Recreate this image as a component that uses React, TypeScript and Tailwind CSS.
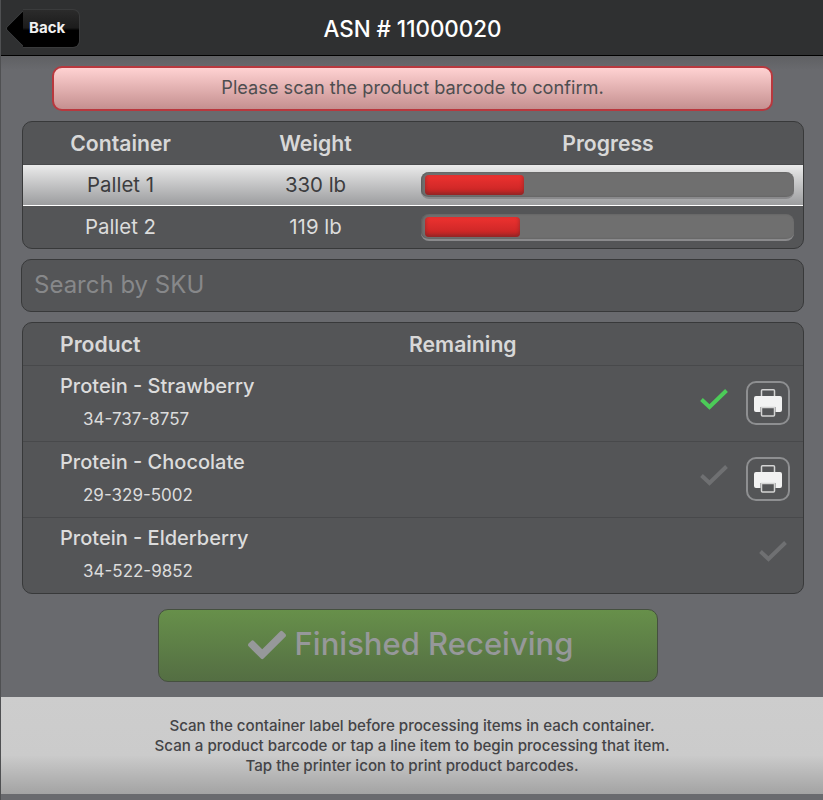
import { FaCheck } from "react-icons/fa";

const containers = [
  { name: "Pallet 1", weight: "330 lb", fill: "w-[99px]", active: true },
  { name: "Pallet 2", weight: "119 lb", fill: "w-[95px]", active: false },
];

const products = [
  { name: "Protein - Strawberry", sku: "34-737-8757", done: true, printer: true },
  { name: "Protein - Chocolate", sku: "29-329-5002", done: false, printer: true },
  { name: "Protein - Elderberry", sku: "34-522-9852", done: false, printer: false },
];

function PrinterIcon() {
  return (
    <svg viewBox="0 0 28 28" className="w-[28px] h-[28px]">
      <path d="M7.500 7.500V1.800a1 1 0 0 1 1-1h11a1 1 0 0 1 1 1v5.700" fill="none" stroke="#d4d4d4" strokeWidth="1.500" />
      <path d="M2 7h24a2 2 0 0 1 2 2v12a2 2 0 0 1-2 2h-4.500v-5h-15v5H2a2 2 0 0 1-2-2V9a2 2 0 0 1 2-2z" fill="#f2f2f2" />
      <path d="M7.500 18.500h13V26a1 1 0 0 1-1 1h-11a1 1 0 0 1-1-1z" fill="none" stroke="#d4d4d4" strokeWidth="1.500" />
    </svg>
  );
}

function Tick({ done }: { done: boolean }) {
  return (
    <svg viewBox="0 0 28 21" className="w-[28px] h-[21px] block">
      <path d="M1.500 10.500L9.500 18L26.500 1.500" fill="none" stroke={done ? "#4ccb58" : "#6f7072"} strokeWidth="4" />
    </svg>
  );
}

export default function App() {
  return (
    <div className="w-[823px] h-[800px] overflow-hidden flex flex-col bg-[#696a6e] border-l border-[#4f5052] font-['Inter',sans-serif]">
      <header className="h-[56px] shrink-0 relative flex items-center justify-center bg-[#2f3031] border-b border-black">
        <button className="absolute left-[6px] top-[9px] h-[39px] w-[73px] flex items-center">
          <span className="absolute left-[3px] top-[6px] w-[27px] h-[27px] rotate-45 rounded-[4px] border-b border-l border-[#3a3b3c] bg-gradient-to-tr from-black via-black to-[#2a2a2a]"></span>
          <span className="absolute left-[16px] right-0 top-0 bottom-0 rounded-r-[7px] border border-l-0 border-[#3a3b3c] bg-[linear-gradient(#2b2b2b_0%,#1c1c1c_48%,#000_55%,#000_100%)]"></span>
          <span className="relative ml-[22px] text-[15px] font-bold text-[#f0f0f0]">Back</span>
        </button>
        <h1 className="pt-[2px] pl-[1px] text-[22.400px] font-medium text-white">ASN # 11000020</h1>
      </header>

      <main className="flex-1 flex flex-col bg-[linear-gradient(#5f6063_0px,#696a6e_14px)]">
        <div className="mt-[10px] ml-[51px] w-[721px] h-[45px] flex items-center justify-center pb-[1px] rounded-[10px] border-2 border-[#b8383e] bg-gradient-to-b from-[#ffd2d2] to-[#c59090] text-[18.200px] text-[#4e4e50]">
          Please scan the product barcode to confirm.
        </div>

        <section className="mt-[10px] ml-[21px] w-[782px] h-[128px] rounded-[10px] border border-[#38393a] bg-[#545557] overflow-hidden">
          <div className="h-[43px] flex items-center pt-[2px] text-[21.200px] font-semibold text-[#d8d8d8] border-b border-[#4a4b4d]">
            <div className="w-[195px] text-center">Container</div>
            <div className="w-[195px] text-center">Weight</div>
            <div className="flex-1 text-center">Progress</div>
          </div>
          {containers.map((c) => (
            <div
              key={c.name}
              className={
                c.active
                  ? "h-[41px] flex items-center text-[20.400px] text-[#3c3c3e] border-b border-white bg-gradient-to-b from-[#ebebeb] to-[#9c9d9f]"
                  : "h-[42px] flex items-center text-[20.400px] text-[#dcdcdc]"
              }
            >
              <div className={c.active ? "w-[195px] pt-[1px] text-center" : "w-[195px] text-center"}>{c.name}</div>
              <div className={c.active ? "w-[195px] pt-[1px] text-center" : "w-[195px] text-center"}>{c.weight}</div>
              <div className="flex-1 pl-[8px] pr-[9px]">
                <div className="h-[27px] rounded-[8px] bg-[#6f6f6f] border-b-2 border-[#8a8a8c] shadow-[inset_1px_0_2px_#5a5a5a] px-[4px] pt-[3px]">
                  <div className={`${c.fill} h-[20px] rounded-[4px] bg-gradient-to-b from-[#ee3230] to-[#c42424] shadow-[inset_0_-2px_4px_rgba(110,40,40,0.7)]`}></div>
                </div>
              </div>
            </div>
          ))}
        </section>

        <input
          readOnly
          placeholder="Search by SKU"
          className="mt-[10px] ml-[20px] w-[783px] h-[53px] shrink-0 px-[12px] pb-[2px] rounded-[10px] border border-[#38393a] bg-[#545557] text-[24px] outline-none placeholder:text-[#87888a]"
        />

        <section className="mt-[10px] ml-[21px] w-[782px] h-[272px] rounded-[10px] border border-[#38393a] bg-[#545557] overflow-hidden">
          <div className="h-[42px] flex items-center pt-[2px] text-[21.200px] font-semibold text-[#d8d8d8]">
            <div className="ml-[37px] w-[349px]">Product</div>
            <div>Remaining</div>
          </div>
          {products.map((p) => (
            <div key={p.sku} className="h-[76px] relative border-t border-[#48494b] text-[#dcdcdc]">
              <div className="ml-[37px] pt-[8px] text-[20px] font-medium leading-[24px]">{p.name}</div>
              <div className="ml-[60px] mt-[11px] text-[17px] leading-[20px]">{p.sku}</div>
              <div className="absolute right-[13px] top-[15px] flex items-center gap-[18px]">
                <div className={p.printer ? "mb-[7px]" : "mt-[8px] mr-[3px]"}>
                  <Tick done={p.done} />
                </div>
                {p.printer && (
                  <div className="w-[44px] h-[44px] flex items-center justify-center rounded-[10px] border-2 border-[#8e8f91]">
                    <PrinterIcon />
                  </div>
                )}
              </div>
            </div>
          ))}
        </section>

        <button className="mt-[15px] ml-[157px] w-[500px] h-[73px] shrink-0 flex items-center justify-center gap-[9px] pl-[5px] pb-[2px] rounded-[10px] border border-[#45503f] bg-gradient-to-b from-[#67904a] to-[#546e43] text-[31px] font-medium text-[#96989a]">
          <FaCheck className="w-[38px] h-[38px]" />
          Finished Receiving
        </button>

        <footer className="mt-[15px] h-[97px] shrink-0 flex flex-col items-center justify-center bg-[linear-gradient(#cdcdcd_0%,#cbcbcb_60%,#a3a3a3_100%)] text-[15.120px] leading-[20px] font-medium text-[#444447]">
          <p>Scan the container label before processing items in each container.</p>
          <p>Scan a product barcode or tap a line item to begin processing that item.</p>
          <p>Tap the printer icon to print product barcodes.</p>
        </footer>
      </main>
    </div>
  );
}
